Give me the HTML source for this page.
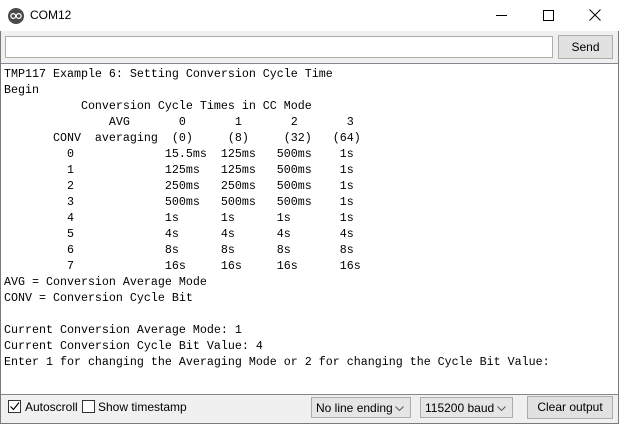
<!DOCTYPE html>
<html><head><style>
*{margin:0;padding:0;box-sizing:border-box}
body{width:619px;height:424px;position:relative;background:#f0f0f0;overflow:hidden;font-family:"Liberation Sans",sans-serif}
.win{position:absolute;left:0;top:0;width:619px;height:424px;border:1px solid #7a7a7a}
.title{position:absolute;left:0;top:0;width:619px;height:31px;background:#fff}
.title .t{position:absolute;left:30px;top:8px;font-size:12px;color:#000}
.ab{position:absolute}
.input{position:absolute;left:5px;top:36px;width:548px;height:22px;background:#fff;border:1px solid #adadad}
.btn{position:absolute;background:#e1e1e1;border:1px solid #adadad;font-size:12px;text-align:center;color:#000}
.ta{position:absolute;left:1px;top:63px;width:617px;height:332px;background:#fff;border-top:1px solid #828790;border-bottom:1px solid #828790}
pre{position:absolute;left:4px;top:66px;font-family:"Liberation Mono",monospace;font-size:11.67px;line-height:16px;color:#000}
.cb{position:absolute;width:13px;height:13px;border:1px solid #333;background:#fff}
.lbl{position:absolute;font-size:12px;color:#000}
.sel{position:absolute;background:#e5e5e5;border:1px solid #adadad;font-size:12px;padding:3px 0 0 4px;height:21px}
.sel svg{position:absolute;right:6px;top:8px}
</style></head><body>
<div class="win"></div>
<div class="title">
<svg class="ab" style="left:8px;top:8px" width="16" height="16"><circle cx="8" cy="8" r="8" fill="#4a4a4a"/><circle cx="5.3" cy="8" r="2.4" fill="none" stroke="#fff" stroke-width="1.3"/><circle cx="10.7" cy="8" r="2.4" fill="none" stroke="#fff" stroke-width="1.3"/></svg>
<div class="t">COM12</div>
<div class="ab" style="left:496px;top:15px;width:11px;height:1px;background:#000"></div>
<div class="ab" style="left:543px;top:10px;width:11px;height:11px;border:1px solid #000"></div>
<svg class="ab" style="left:589px;top:9px" width="12" height="12"><path d="M0.5 0.5L11.5 11.5M11.5 0.5L0.5 11.5" stroke="#000" stroke-width="1"/></svg>
</div>
<div class="input"></div>
<div class="btn" style="left:558px;top:35px;width:55px;height:24px;line-height:22px">Send</div>
<div class="ta"></div>
<pre>TMP117 Example 6: Setting Conversion Cycle Time
Begin
           Conversion Cycle Times in CC Mode
               AVG       0       1       2       3
       CONV  averaging  (0)     (8)     (32)   (64)
         0             15.5ms  125ms   500ms    1s
         1             125ms   125ms   500ms    1s
         2             250ms   250ms   500ms    1s
         3             500ms   500ms   500ms    1s
         4             1s      1s      1s       1s
         5             4s      4s      4s       4s
         6             8s      8s      8s       8s
         7             16s     16s     16s      16s
AVG = Conversion Average Mode
CONV = Conversion Cycle Bit

Current Conversion Average Mode: 1
Current Conversion Cycle Bit Value: 4
Enter 1 for changing the Averaging Mode or 2 for changing the Cycle Bit Value:</pre>
<div class="cb" style="left:8px;top:400px"><svg width="11" height="11" style="position:absolute;left:0;top:0"><path d="M1.5 5.5L4.5 8.5L10 1.5" fill="none" stroke="#000" stroke-width="1.2"/></svg></div>
<div class="lbl" style="left:25px;top:400px">Autoscroll</div>
<div class="cb" style="left:82px;top:400px"></div>
<div class="lbl" style="left:98px;top:400px">Show timestamp</div>
<div class="sel" style="left:311px;top:397px;width:100px">No line ending<svg width="9" height="5"><path d="M0.5 0.5L4.5 4.5L8.5 0.5" fill="none" stroke="#555"/></svg></div>
<div class="sel" style="left:420px;top:397px;width:93px">115200 baud<svg width="9" height="5"><path d="M0.5 0.5L4.5 4.5L8.5 0.5" fill="none" stroke="#555"/></svg></div>
<div class="btn" style="left:527px;top:396px;width:86px;height:23px;line-height:21px">Clear output</div>
</body></html>
